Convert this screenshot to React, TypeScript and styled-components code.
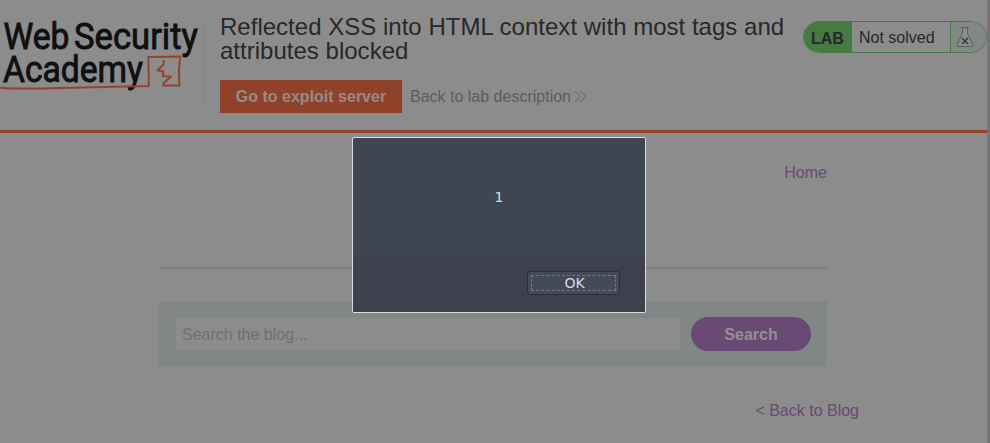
import React from "react";
import styled, { createGlobalStyle } from "styled-components";

const GlobalStyle = createGlobalStyle`
  *, *::before, *::after { box-sizing: border-box; }
  html, body { margin: 0; background: #8c8c8c; }
  body { font-family: "Liberation Sans", Arial, sans-serif; font-size: 16px; color: #282828; overflow: hidden; }
`;

const Window = styled.div`
  position: relative;
  width: 990px;
  height: 443px;
  overflow: hidden;
  background: #8c8c8c;
  border-right: 3px solid #767474;
`;

const Header = styled.header`
  display: flex;
  height: 133px;
  padding-top: 21px;
  border-bottom: 3px solid #8f4229;
`;

const LogoBox = styled.div`
  width: 204px;
  height: 86px;
  border-right: 1px solid #808080;
`;

const LogoSvg = styled.svg`
  display: block;
  overflow: visible;
`;

const TitleColumn = styled.div`
  width: 599px;
  padding-left: 16px;
`;

const Title = styled.h2`
  margin: -6px 0 0;
  font-size: 24px;
  font-weight: 400;
  line-height: 24px;
  letter-spacing: 0.015px;
  white-space: nowrap;
`;

const Actions = styled.div`
  display: flex;
  align-items: center;
  gap: 8px;
  margin-top: 17px;
`;

const ExploitLink = styled.a`
  width: 182px;
  height: 33px;
  line-height: 33px;
  text-align: center;
  font-weight: 700;
  color: #978a86;
  background: #8f4229;
`;

const LabLink = styled.a`
  display: flex;
  align-items: center;
  gap: 3px;
  line-height: 33px;
  color: #5c5c5c;
`;

const Status = styled.div`
  display: flex;
  flex: none;
  width: 184px;
  height: 32px;
  border: 1px solid #467a43;
  border-radius: 16px;
  overflow: hidden;
  line-height: 31px;
`;

const StatusTag = styled.span`
  width: 48px;
  padding-left: 7px;
  font-weight: 700;
  line-height: 33px;
  background: #467a43;
`;

const StatusText = styled.span`
  width: 98px;
  padding-left: 7px;
`;

const StatusIcon = styled.span`
  flex: 1;
  padding: 4px 0 0 5px;
  border-left: 1px solid #467a43;
  background: #828888;
  line-height: 0;
`;

const Content = styled.main`
  width: 668px;
  margin-left: 159px;
`;

const Nav = styled.nav`
  display: flex;
  justify-content: flex-end;
  height: 136px;
  padding-top: 31px;
  line-height: 18px;
  border-bottom: 2px solid #7e7e7e;
`;

const PurpleLink = styled.a`
  color: #694a74;
`;

const SearchPanel = styled.form`
  display: flex;
  gap: 10px;
  height: 66px;
  margin: 32px 0 0;
  padding: 16px;
  background: #818686;
`;

const SearchInput = styled.input`
  width: 506px;
  height: 34px;
  padding: 2px 0 0 6px;
  border: 1px solid #858787;
  background: #8c8c8c;
  font: 16px "Liberation Sans", Arial, sans-serif;
  outline: none;
  &::placeholder { color: #707070; opacity: 1; }
`;

const SearchButton = styled.button`
  width: 120px;
  height: 34px;
  padding: 2px 0 0;
  border: 0;
  border-radius: 17px;
  color: #939093;
  background: #694a74;
  font: 700 16px "Liberation Sans", Arial, sans-serif;
`;

const BackRow = styled.div`
  display: flex;
  justify-content: flex-end;
  margin: 35px -32px 0 0;
  line-height: 18px;
`;

const Dialog = styled.div`
  position: absolute;
  left: 352px;
  top: 137px;
  width: 294px;
  height: 176px;
  display: flex;
  flex-direction: column;
  border: 1px solid #dcdddf;
  border-radius: 2px;
  background: #404651;
  color: #d3dae3;
  font-family: "DejaVu Sans", sans-serif;
  font-size: 14px;
`;

const DialogMessage = styled.div`
  height: 119px;
  line-height: 118px;
  text-align: center;
`;

const DialogFooter = styled.div`
  flex: 1;
  display: flex;
  justify-content: flex-end;
  padding: 13px 25px 0 0;
  border-top: 1px solid #3a3e49;
  background: #3d414d;
`;

const OkButton = styled.button`
  width: 93px;
  height: 24px;
  padding: 3px;
  border: 1px solid #2b2e39;
  border-radius: 3px;
  background: #444a58;
  color: #d3dae3;
  font: 14px "DejaVu Sans", sans-serif;
`;

const FocusRing = styled.span`
  display: block;
  height: 16px;
  padding-left: 2px;
  line-height: 15px;
  border: 1px dashed #707786;
  border-radius: 1px;
`;

const Logo = () => (
  <LogoSvg width="203" height="86" viewBox="0 21 203 86" role="img" aria-label="Web Security Academy">
    <g fill="#101010" stroke="#101010" strokeWidth="0.9" fontFamily="Roboto, sans-serif" fontWeight="400" fontSize="36.5">
      <text x="3.5" y="49" textLength="66" lengthAdjust="spacingAndGlyphs">Web</text>
      <text x="74" y="49" textLength="124" lengthAdjust="spacingAndGlyphs">Security</text>
      <text x="3" y="82" textLength="140" lengthAdjust="spacingAndGlyphs">Academy</text>
    </g>
    <g fill="none" stroke="#96432a" strokeWidth="2" strokeLinejoin="round" strokeLinecap="round">
      <path d="M1 87.8 Q8 89 40 88.4 L105 87 L148.8 86 L148.4 57 L180.2 56.4 L178.9 70 L179.4 85.4 L163.2 85.6 L163.7 83 L171 76.8 L162.9 76 L163.3 71.4 L157.5 70.2 L163.2 65 L164 61" />
      <path d="M3 88.5 L48 89" strokeWidth="0.8" />
    </g>
  </LogoSvg>
);

const Chevrons = () => (
  <svg width="13" height="14" viewBox="0 0 13 14" fill="none" stroke="#606060">
    <path d="M1 1 L6.3 6.5 L1 12 M6.2 1 L11.7 6.5 L6.2 12" />
  </svg>
);

const Flask = () => (
  <svg width="18" height="22" viewBox="0 0 18 22" fill="none">
    <path d="M6.5 2 V7 L1.5 18 V20.5 H16.5 V18 L11.5 7 V2" fill="#8c8c8c" stroke="#5c5f5f" />
    <path d="M5 1.5 H13" stroke="#5c5f5f" />
    <path d="M6 12 L12 18 M12 12 L6 18" stroke="#333" strokeWidth="1.3" />
  </svg>
);

export default function App() {
  return (
    <>
      <GlobalStyle />
      <Window>
        <Header>
          <LogoBox><Logo /></LogoBox>
          <TitleColumn>
            <Title>Reflected XSS into HTML context with most tags and<br />attributes blocked</Title>
            <Actions>
              <ExploitLink>Go to exploit server</ExploitLink>
              <LabLink>Back to lab description<Chevrons /></LabLink>
            </Actions>
          </TitleColumn>
          <Status>
            <StatusTag>LAB</StatusTag>
            <StatusText>Not solved</StatusText>
            <StatusIcon><Flask /></StatusIcon>
          </Status>
        </Header>
        <Content>
          <Nav><PurpleLink>Home</PurpleLink></Nav>
          <SearchPanel>
            <SearchInput placeholder="Search the blog..." />
            <SearchButton type="button">Search</SearchButton>
          </SearchPanel>
          <BackRow><PurpleLink>&lt; Back to Blog</PurpleLink></BackRow>
        </Content>
        <Dialog role="dialog">
          <DialogMessage>1</DialogMessage>
          <DialogFooter><OkButton><FocusRing>OK</FocusRing></OkButton></DialogFooter>
        </Dialog>
      </Window>
    </>
  );
}
